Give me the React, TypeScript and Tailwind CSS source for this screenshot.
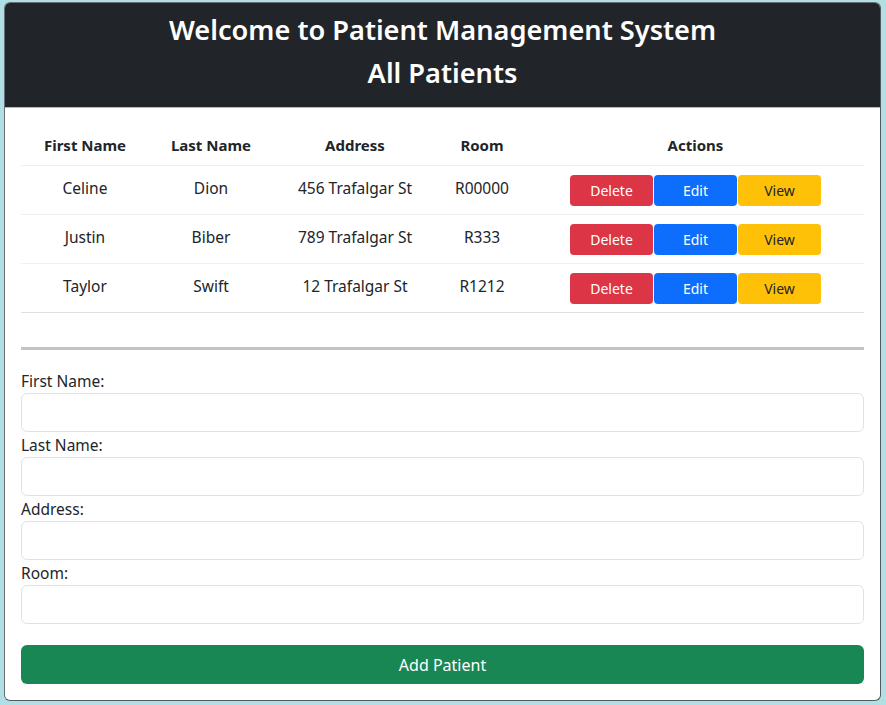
import React from "react";

const rows = [
  { first: "Celine", last: "Dion", address: "456 Trafalgar St", room: "R00000", line: "border-[#eef0f2]" },
  { first: "Justin", last: "Biber", address: "789 Trafalgar St", room: "R333", line: "border-[#eef0f2]" },
  { first: "Taylor", last: "Swift", address: "12 Trafalgar St", room: "R1212", line: "border-[#dcdfe3]" },
];

const fields = ["First Name:", "Last Name:", "Address:", "Room:"];

export default function App() {
  return (
    <div
      className="min-h-screen bg-[#b0e0e6] pt-[2px] pl-[4px]"
      style={{ fontFamily: '"Noto Sans", "Open Sans", sans-serif' }}
    >
      <div className="w-[877px] h-[699px] bg-white border border-[#6b6f73] border-r-[#555a5e] border-b-[#555a5e] rounded-[6px] overflow-hidden flex flex-col">
        <div className="h-[105px] bg-[#212529] text-white text-center pt-[5px] text-[27.2px] font-semibold leading-[43px] border-b border-[#b8b8b8]">
          <div>Welcome to Patient Management System</div>
          <div>All Patients</div>
        </div>
        <div className="px-[16px] pt-[18px] text-[15.5px] text-[#212529]">
          <div className="grid grid-cols-[128px_124px_164px_90px_1fr] h-[40px] items-center text-center font-bold text-[15px] border-b border-[#eef0f2]">
            <div>First Name</div>
            <div>Last Name</div>
            <div>Address</div>
            <div>Room</div>
            <div>Actions</div>
          </div>
          {rows.map((r, i) => (
            <div
              key={i}
              className={`grid grid-cols-[128px_124px_164px_90px_1fr] h-[49px] items-center text-center border-b ${r.line}`}
            >
              <div className="-mt-[3px]">{r.first}</div>
              <div className="-mt-[3px]">{r.last}</div>
              <div className="-mt-[3px]">{r.address}</div>
              <div className="-mt-[3px]">{r.room}</div>
              <div className="flex justify-center gap-[1px] text-[14px]">
                <button className="w-[83px] h-[31px] bg-[#dc3545] text-white rounded-[4px]">Delete</button>
                <button className="w-[83px] h-[31px] bg-[#0d6efd] text-white rounded-[4px]">Edit</button>
                <button className="w-[83px] h-[31px] bg-[#ffc107] text-[#212529] rounded-[4px]">View</button>
              </div>
            </div>
          ))}
          <div className="mt-[34px] h-[3px] bg-[#c4c4c4]" />
          <div className="pt-[20px] flex flex-col">
            {fields.map((f) => (
              <div key={f} className="flex flex-col mb-[2px]">
                <label className="h-[23px] leading-[23px]">{f}</label>
                <input className="h-[39px] border border-[#dee2e6] rounded-[6px] bg-white" />
              </div>
            ))}
          </div>
          <button className="mt-[19px] w-full h-[39px] bg-[#198754] text-white rounded-[6px] text-[16px]">
            Add Patient
          </button>
        </div>
      </div>
    </div>
  );
}
